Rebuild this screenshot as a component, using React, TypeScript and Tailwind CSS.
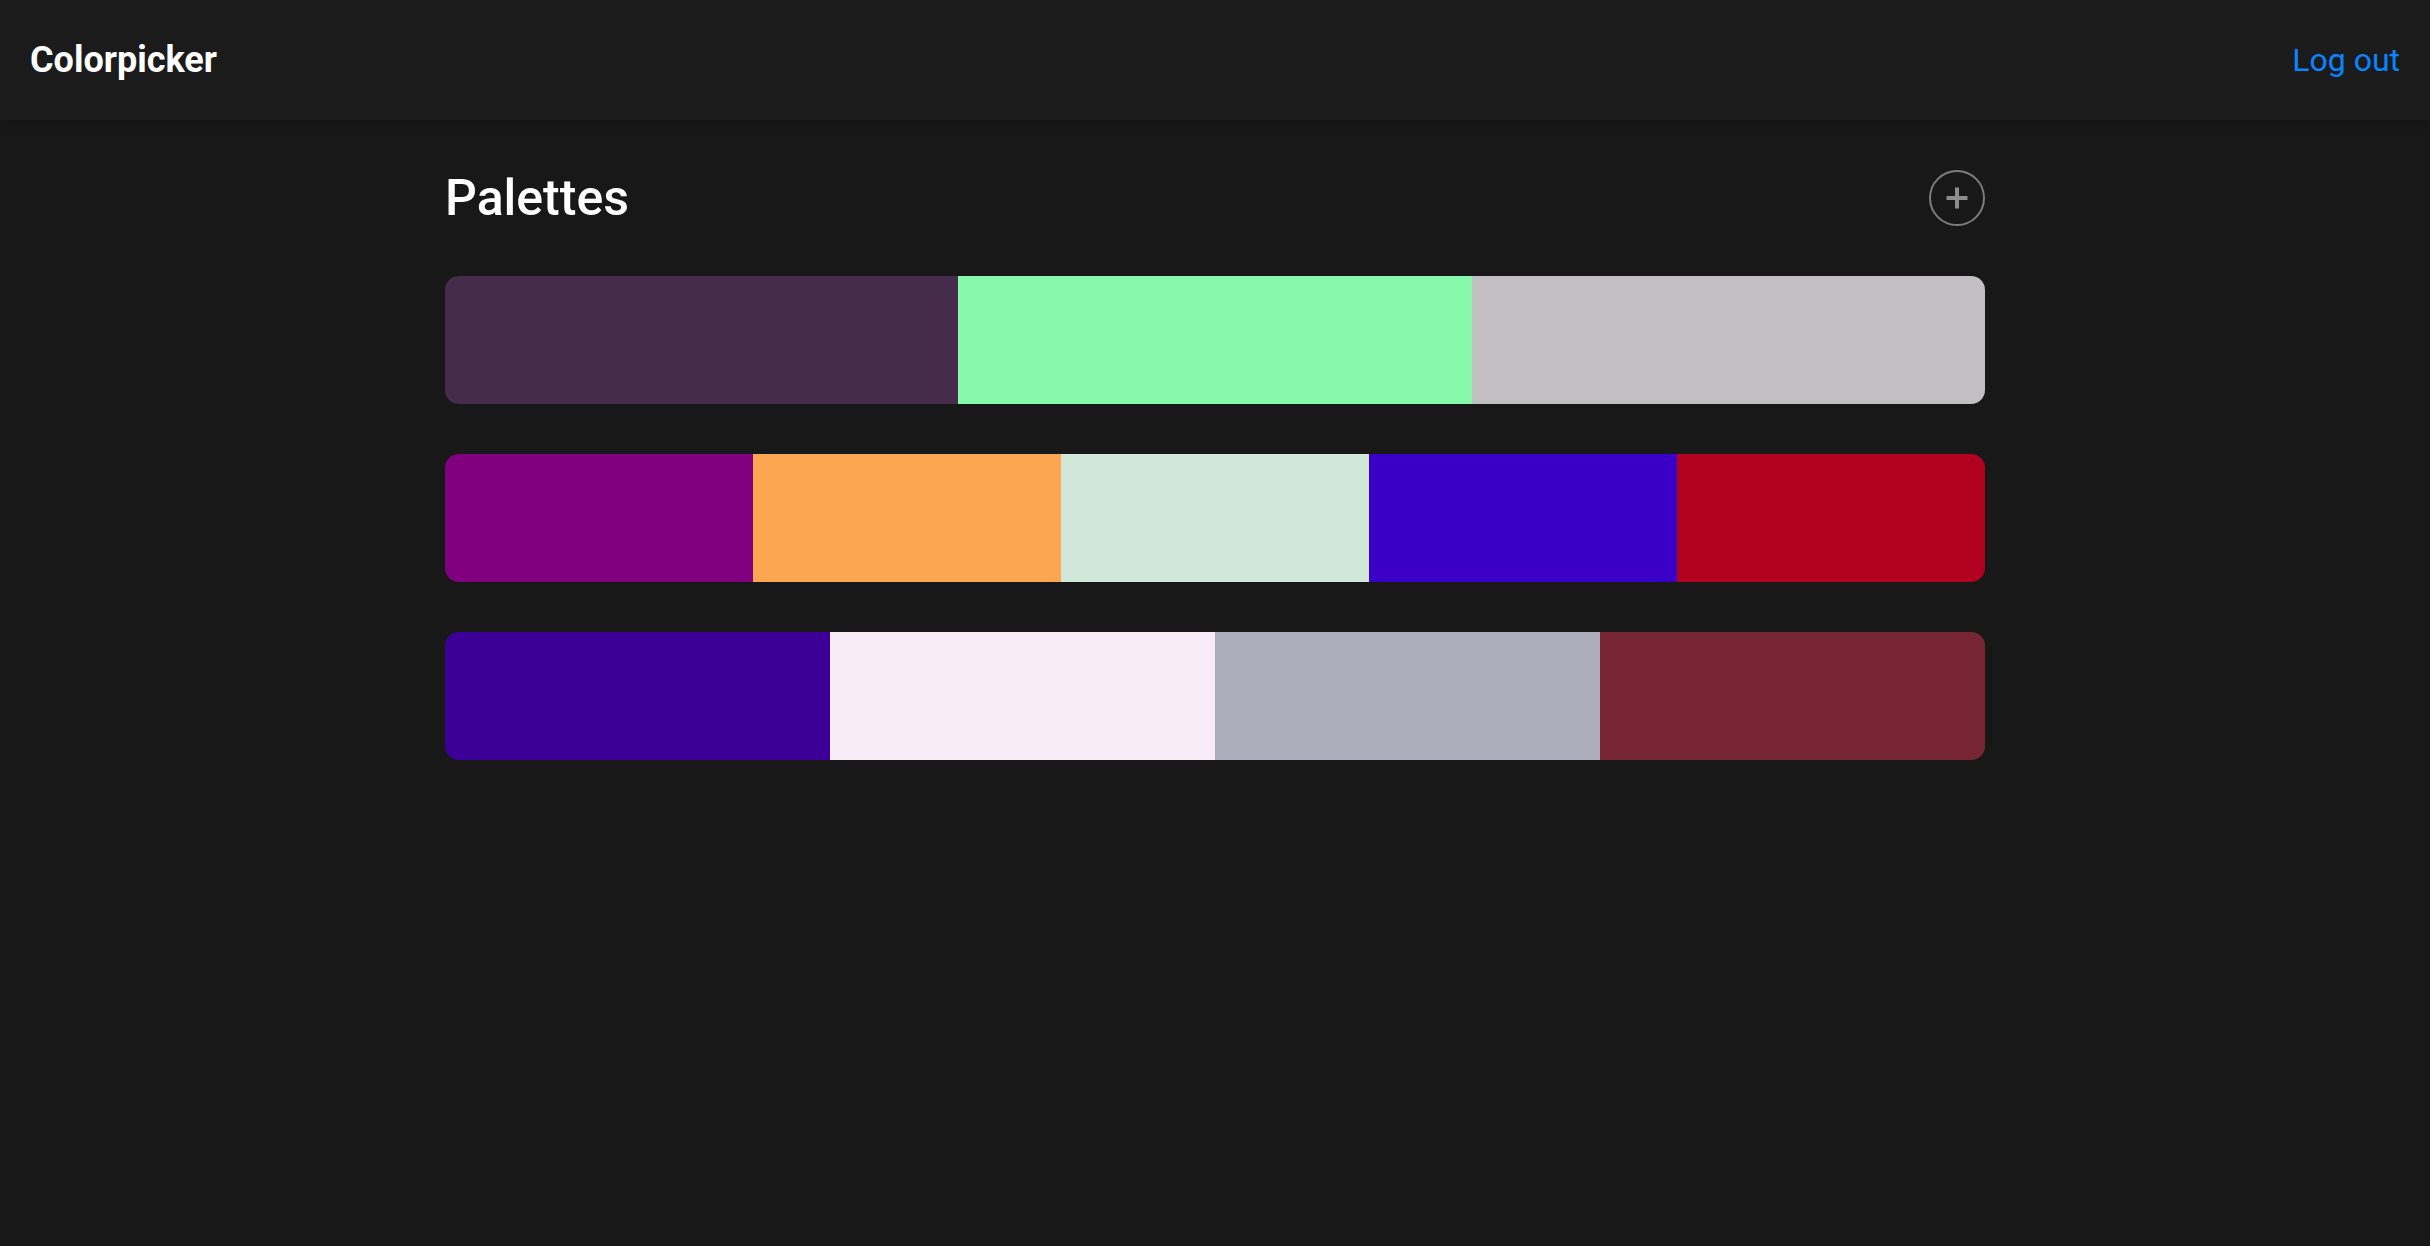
import React from "react";

const palettes: string[][] = [
  ["#452c4c", "#87f9ab", "#c2bfc2"],
  ["#800080", "#fca652", "#d1e7d8", "#3a00c8", "#b10020"],
  ["#3d0097", "#f8ecf9", "#adacbb", "#772535"],
];

function Header() {
  return (
    <div className="flex flex-row items-center justify-between w-full h-[120px] px-[30px] bg-[#1b1b1b] shadow-[0_3px_8px_rgba(0,0,0,0.18)] relative">
      <h1 className="text-[36px] font-bold text-white">Colorpicker</h1>
      <a href="#" className="text-[32px] text-[#0a84ff]">
        Log out
      </a>
    </div>
  );
}

function PaletteRow({ colors }: { colors: string[] }) {
  return (
    <div className="flex flex-row w-full h-[128px] rounded-[14px] overflow-hidden">
      {colors.map((c, i) => (
        <div key={i} className="flex-1 h-full" style={{ backgroundColor: c }} />
      ))}
    </div>
  );
}

export default function App() {
  return (
    <div className="min-h-[1246px] w-full bg-[#181818] font-['Roboto',sans-serif]">
      <Header />
      <div className="flex flex-col w-[1540px] mx-auto pt-[50px] gap-[50px]">
        <div className="flex flex-row items-center justify-between h-[56px]">
          <h2 className="text-[50px] font-medium text-white">Palettes</h2>
          <button className="flex items-center justify-center w-[56px] h-[56px] rounded-full border-2 border-[#7c7c7c]">
            <svg width="24" height="24" viewBox="0 0 24 24">
              <path d="M12 1.5v21M1.5 12h21" stroke="#8c8c8c" strokeWidth="4" />
            </svg>
          </button>
        </div>
        {palettes.map((p, i) => (
          <PaletteRow key={i} colors={p} />
        ))}
      </div>
    </div>
  );
}
